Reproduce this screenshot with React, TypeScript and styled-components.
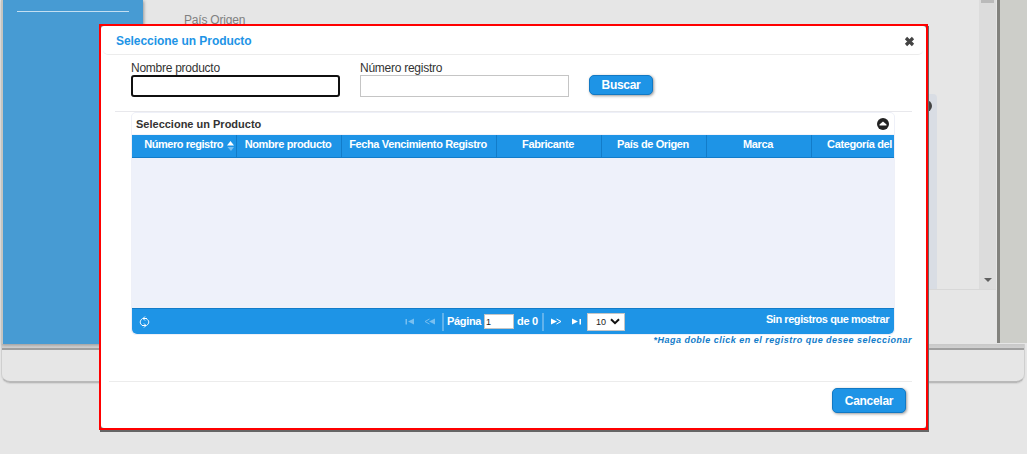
import React from 'react';
import styled, { createGlobalStyle } from 'styled-components';

const Global = createGlobalStyle`
  *{box-sizing:border-box}
  body{margin:0;background:#e6e6e6;font-family:"Liberation Sans",Arial,sans-serif;font-size:12px;color:#333;overflow:hidden}
`;
const Screen = styled.div`position:relative;width:1027px;height:454px;overflow:hidden;background:#e6e6e6;`;
const Page = styled.div`display:flex;height:344px;padding-left:1px;`;
const Sidebar = styled.aside`
  width:142px;height:344px;border-left:2px solid #c4c4c0;background:#479bd3;
  box-shadow:1px 1px 3px #999;padding:11px 14px;
`;
const SideRule = styled.div`height:1px;background:#c3dff2;`;
const Content = styled.main`flex:1;height:290px;border-bottom:1px solid #d8d8d8;display:flex;justify-content:space-between;`;
const Faded = styled.div`padding:13px 0 0 41px;color:#808080;line-height:14px;letter-spacing:-.2px;`;
const GridEdge = styled.div`
  margin:94px 42px 0 auto;width:14px;height:195px;background:#d9dde4;border-radius:0 4px 0 0;padding-top:6px;
`;
const EdgeDot = styled.div`width:12px;height:12px;border-radius:6px;background:#444;margin-left:-3px;`;
const Scrollbar = styled.div`
  width:17px;background:#dcdcdc;display:flex;flex-direction:column;justify-content:space-between;align-items:center;padding-bottom:7px;
`;
const Thumb = styled.div`width:13px;height:3px;background:#bababa;`;
const Gutter = styled.div`width:30px;height:343px;margin-left:1px;border-left:3px solid #82827e;background:#cdcec9;`;
const Footer = styled.footer`
  height:39px;margin:0 2px 0 1px;border:1px solid #cfcfcf;border-bottom:2px solid #b9b9b9;border-top:0;
  border-radius:0 0 9px 9px;box-shadow:0 1px 1px #d4d4d4;
`;
const FooterBar = styled.div`height:6px;background:linear-gradient(#c8c8c8,#d0d0d0 66%,#a0a0a0 67%,#a0a0a0);`;

const Dialog = styled.section`
  position:absolute;left:99px;top:24px;width:829px;height:406px;border:2px solid #f00;background:#777;
  box-shadow:1px 2px 0 #666;display:flex;
`;
const Panel = styled.div`flex:1;min-width:0;background:#fff;border-radius:3px;display:flex;flex-direction:column;`;
const TitleBar = styled.header`
  height:29px;margin:0 3px 0 2px;padding:0 8px 0 13px;border-bottom:1px solid #ececec;border-radius:0 0 5px 5px;
  display:flex;align-items:center;justify-content:space-between;
`;
const Title = styled.h1`margin:1px 0 0;font-size:12px;line-height:14px;color:#1e94e6;letter-spacing:-.05px;`;
const CloseIcon = styled.svg`width:11px;height:11px;margin-top:2px;`;
const Form = styled.form`
  height:57px;margin:0 14px;padding:6px 0 0 16px;border-bottom:1px solid #e8e8ec;display:flex;gap:20px;
`;
const Field = styled.label`width:209px;display:flex;flex-direction:column;line-height:14px;color:#333;letter-spacing:-.26px;`;
const Input = styled.input<{ $active?: boolean }>`
  width:209px;height:22px;padding:0;outline:none;background:#fff;
  border:${p => p.$active ? '2px solid #101010' : '1px solid #c5c5c5'};border-radius:${p => p.$active ? '3px' : '0'};
`;
const Button = styled.button<{ $large?: boolean }>`
  width:${p => p.$large ? 74 : 64}px;height:${p => p.$large ? 25 : 20}px;padding:0;
  border:1px solid #1279c4;border-radius:5px;background:#1e94e6;color:#fff;box-shadow:1px 1px 3px #999;
  font:bold 12px/14px "Liberation Sans",Arial,sans-serif;letter-spacing:-.3px;
`;
const SearchSlot = styled.div`padding-top:14px;`;
const Grid = styled.div`width:764px;height:223px;margin-left:30px;border:1px solid #eef0f8;border-radius:5px;overflow:hidden;background:#eef1fa;`;
const Caption = styled.div`
  height:22px;padding:1px 5px 0 4px;background:#fff;display:flex;align-items:center;justify-content:space-between;
  font-weight:bold;font-size:11px;line-height:13px;border-bottom:1px solid #f4f4fa;
`;
const HeadRow = styled.div`display:flex;height:23px;width:790px;background:#1e94e6;border-bottom:1px solid #127cc9;`;
const Head = styled.div<{ $w: number; $sorted?: boolean }>`
  width:${p => p.$w}px;flex:none;border-right:1px solid #127cc9;color:#fff;font-weight:bold;font-size:11px;line-height:19px;
  display:flex;justify-content:${p => p.$sorted ? 'flex-end' : 'center'};padding-right:2px;
  gap:4px;white-space:nowrap;letter-spacing:${p => p.$sorted ? '-.45px' : '-.37px'};
`;
const SortIcon = styled.svg`margin-top:6px;width:7px;height:10px;`;
const Rows = styled.div`height:150px;`;
const Pager = styled.div`
  height:26px;background:#1e94e6;border-top:1px solid #127cc9;border-radius:0 0 5px 5px;color:#fff;font-weight:bold;font-size:11px;
  display:grid;grid-template-columns:271px 222px 1fr;align-items:center;
`;
const Refresh = styled.svg`width:11px;height:12px;margin-left:7px;`;
const Controls = styled.div`display:flex;align-items:center;height:25px;`;
const Arrow = styled.svg<{ $dim?: boolean; $gap: number }>`
  width:11px;height:7px;flex:none;fill:#fff;opacity:${p => p.$dim ? .4 : 1};margin-right:${p => p.$gap}px;
`;
const Divider = styled.i<{ $gap: number }>`width:2px;height:18px;background:#62b3ec;flex:none;margin-right:${p => p.$gap}px;`;
const PageLabel = styled.span<{ $w: number; $gap: number }>`
  flex:none;width:${p => p.$w}px;margin-right:${p => p.$gap}px;white-space:nowrap;line-height:13px;padding-bottom:1px;letter-spacing:-.33px;
`;
const PageInput = styled.input`
  flex:none;width:30px;height:15px;margin-right:3px;padding:0 0 0 1px;border:1px solid #c5c5c5;background:#fff;
  font:9px "Liberation Sans",Arial,sans-serif;color:#222;
`;
const Select = styled.div`
  width:38px;height:18px;flex:none;border:1px solid #c5c5c5;background:#fff;color:#222;font-weight:normal;font-size:9px;
  display:flex;align-items:center;justify-content:space-between;padding:0 4px 0 8px;
`;
const Status = styled.div`text-align:right;padding-right:5px;line-height:13px;margin-top:-4px;letter-spacing:-.43px;`;
const Hint = styled.p`
  margin:0 14px 0 0;text-align:right;color:#127cc9;font:italic bold 9px/11px "Liberation Sans",Arial,sans-serif;letter-spacing:.49px;
`;
const Actions = styled.div`
  margin:auto 14px 0 8px;height:47px;border-top:1px solid #ececec;padding:6px 6px 0 0;display:flex;justify-content:flex-end;
`;

const columns: [string, number][] = [
  ['Número registro', 105], ['Nombre producto', 105], ['Fecha Vencimiento Registro', 155], ['Fabricante', 105],
  ['País de Origen', 105], ['Marca', 105], ['Categoría del', 98],
];

export default function App() {
  return (
    <Screen>
      <Global />
      <Page>
        <Sidebar><SideRule /></Sidebar>
        <Content>
          <Faded>País Origen</Faded>
          <GridEdge><EdgeDot /></GridEdge>
          <Scrollbar><Thumb /><svg width="8" height="4"><path d="M0 0h8L4 4z" fill="#606060" /></svg></Scrollbar>
        </Content>
        <Gutter />
      </Page>
      <Footer><FooterBar /></Footer>
      <Dialog>
        <Panel>
          <TitleBar>
            <Title>Seleccione un Producto</Title>
            <CloseIcon viewBox="0 0 11 11"><path d="M2 2l7 7M9 2L2 9" stroke="#444" strokeWidth="3.2" /></CloseIcon>
          </TitleBar>
          <Form>
            <Field>Nombre producto<Input $active /></Field>
            <Field>Número registro<Input /></Field>
            <SearchSlot><Button type="button">Buscar</Button></SearchSlot>
          </Form>
          <Grid>
            <Caption>
              Seleccione un Producto
              <svg width="12" height="12"><circle cx="6" cy="6" r="6" fill="#222" /><path d="M2.500 7.500V6.500L6 3.500l3.500 3v1z" fill="#fff" /></svg>
            </Caption>
            <HeadRow>
              {columns.map(([name, w], i) => (
                <Head key={name} $w={w} $sorted={i === 0}>
                  {name}
                  {i === 0 && <SortIcon><path d="M0 4.500L3.500 0 7 4.500z" fill="#fff" /><path d="M.5 6H7L4 10z" fill="#78bdf0" /></SortIcon>}
                </Head>
              ))}
            </HeadRow>
            <Rows />
            <Pager>
              <Refresh viewBox="0 0 11 12" fill="none" stroke="#fff"><path d="M3.500 9.500C.5 8 .5 4.500 3.500 2.500M4 2.500H8M6 .5l-2 2 2 2M7.500 3C10.500 4.500 10.500 7.500 7.500 9.500M7 9.500H3M5 7.500l2 2-2 2" /></Refresh>
              <Controls>
                <Arrow $dim $gap={10}><path d="M2.500 1H4v5.500H2.500zM11 .5v6L5 3.500z" /></Arrow>
                <Arrow $dim $gap={7}><path d="M11 .5v6L5 3.500z" /><path d="M5.500 1L1 3.500 5.500 6" fill="none" stroke="#fff" /></Arrow>
                <Divider $gap={3} />
                <PageLabel $w={34} $gap={3}>Página</PageLabel>
                <PageInput defaultValue="1" />
                <PageLabel $w={21} $gap={4}>de 0</PageLabel>
                <Divider $gap={7} />
                <Arrow $gap={9}><path d="M0 .5v6l6-3z" /><path d="M5.500 1L10 3.500 5.500 6" fill="none" stroke="#fff" /></Arrow>
                <Arrow $gap={5}><path d="M1 .5v6l6-3zM8.500 1H10v5.500H8.500z" /></Arrow>
                <Select>
                  10
                  <svg width="10" height="7"><path d="M1 1.200l4 4 4-4" fill="none" stroke="#111" strokeWidth="2" /></svg>
                </Select>
              </Controls>
              <Status>Sin registros que mostrar</Status>
            </Pager>
          </Grid>
          <Hint>*Haga doble click en el registro que desee seleccionar</Hint>
          <Actions><Button $large>Cancelar</Button></Actions>
        </Panel>
      </Dialog>
    </Screen>
  );
}
